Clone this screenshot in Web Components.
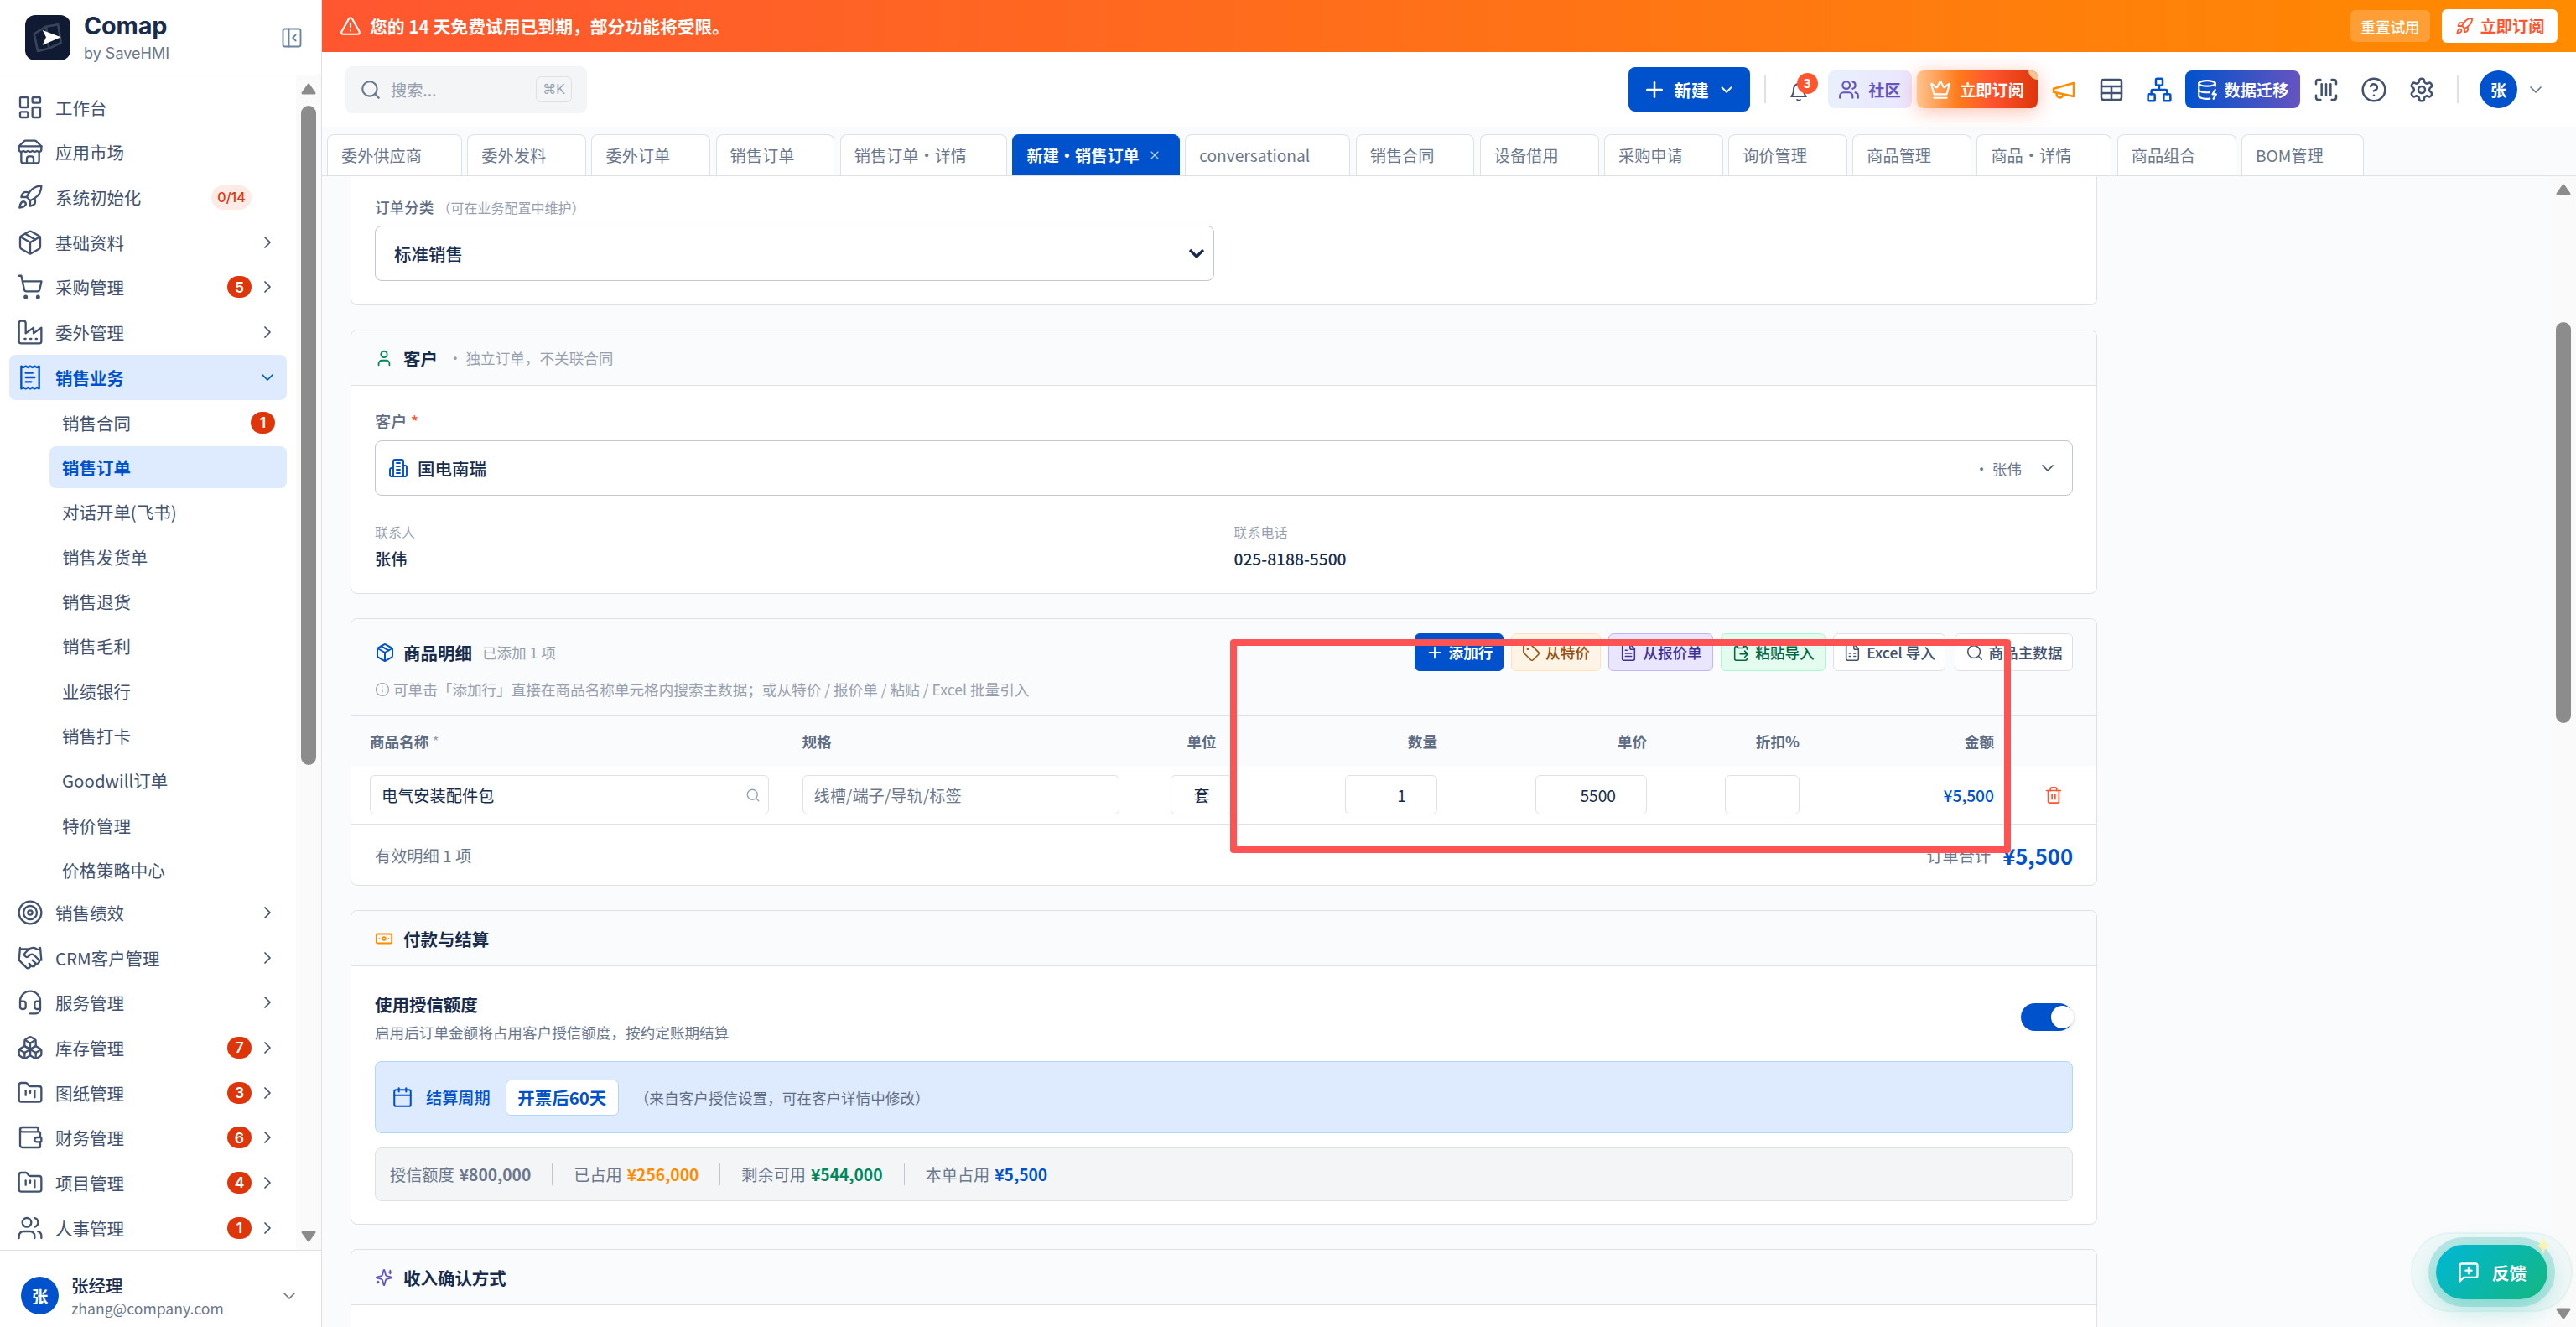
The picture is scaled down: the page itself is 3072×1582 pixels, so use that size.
<!DOCTYPE html>
<html lang="zh-CN">
<head>
<meta charset="utf-8">
<title>Comap</title>
<style>
  html, body { margin: 0; padding: 0; height: 100%; overflow: hidden; background: #fafbfc; }
  body { font-family: "Noto Sans CJK SC", Inter, sans-serif; color: #172b4d; }
</style>
</head>
<body>
<app-shell></app-shell>
<script>
  const p = (...ds) => ds.map((d) => `<path d="${d}"/>`).join('');
  const file = 'M15 2H6a2 2 0 0 0-2 2v16a2 2 0 0 0 2 2h12a2 2 0 0 0 2-2V7Z';

  const ICONS = {
    dashboard: '<rect x="3" y="3" width="7" height="9" rx="1"/><rect x="14" y="3" width="7" height="5" rx="1"/><rect x="14" y="12" width="7" height="9" rx="1"/><rect x="3" y="16" width="7" height="5" rx="1"/>',
    store: p('m2 7 4.41-4.41A2 2 0 0 1 7.83 2h8.34a2 2 0 0 1 1.42.59L22 7', 'M4 12v8a2 2 0 0 0 2 2h12a2 2 0 0 0 2-2v-8', 'M15 22v-4a2 2 0 0 0-2-2h-2a2 2 0 0 0-2 2v4', 'M2 7h20', 'M22 7v3a2 2 0 0 1-2 2a2.7 2.7 0 0 1-1.59-.63.7.7 0 0 0-.82 0A2.7 2.7 0 0 1 16 12a2.7 2.7 0 0 1-1.59-.63.7.7 0 0 0-.82 0A2.7 2.7 0 0 1 12 12a2.7 2.7 0 0 1-1.59-.63.7.7 0 0 0-.82 0A2.7 2.7 0 0 1 8 12a2.7 2.7 0 0 1-1.59-.63.7.7 0 0 0-.82 0A2.7 2.7 0 0 1 4 12a2 2 0 0 1-2-2V7'),
    rocket: p('M4.5 16.5c-1.5 1.26-2 5-2 5s3.74-.5 5-2c.71-.84.7-2.13-.09-2.91a2.18 2.18 0 0 0-2.91-.09z', 'm12 15-3-3a22 22 0 0 1 2-3.95A12.88 12.88 0 0 1 22 2c0 2.72-.78 7.5-6 11a22.35 22.35 0 0 1-4 2z', 'M9 12H4s.55-3.03 2-4c1.62-1.08 5 0 5 0', 'M12 15v5s3.03-.55 4-2c1.08-1.62 0-5 0-5'),
    package: p('m7.5 4.27 9 5.15', 'M21 8a2 2 0 0 0-1-1.73l-7-4a2 2 0 0 0-2 0l-7 4A2 2 0 0 0 3 8v8a2 2 0 0 0 1 1.73l7 4a2 2 0 0 0 2 0l7-4A2 2 0 0 0 21 16Z', 'm3.3 7 8.7 5 8.7-5', 'M12 22V12'),
    cart: '<circle cx="8" cy="21" r="1"/><circle cx="19" cy="21" r="1"/>' + p('M2.05 2.05h2l2.66 12.42a2 2 0 0 0 2 1.58h9.78a2 2 0 0 0 1.95-1.57l1.65-7.43H5.12'),
    factory: p('M2 20a2 2 0 0 0 2 2h16a2 2 0 0 0 2-2V8l-7 5V8l-7 5V4a2 2 0 0 0-2-2H4a2 2 0 0 0-2 2Z', 'M17 18h1', 'M12 18h1', 'M7 18h1'),
    receipt: p('M4 2v20l2-1 2 1 2-1 2 1 2-1 2 1 2-1 2 1V2l-2 1-2-1-2 1-2-1-2 1-2-1-2 1Z', 'M14 8H8', 'M16 12H8', 'M13 16H8'),
    target: '<circle cx="12" cy="12" r="10"/><circle cx="12" cy="12" r="6"/><circle cx="12" cy="12" r="2"/>',
    handshake: p('m11 17 2 2a1 1 0 1 0 3-3', 'm14 14 2.5 2.5a1 1 0 1 0 3-3l-3.88-3.88a3 3 0 0 0-4.24 0l-.88.88a1 1 0 1 1-3-3l2.81-2.81a5.79 5.79 0 0 1 7.06-.87l.47.28a2 2 0 0 0 1.42.25L21 4', 'm21 3 1 11h-2', 'M3 3 2 14l6.5 6.5a1 1 0 1 0 3-3', 'M3 4h8'),
    headset: p('M3 11h3a2 2 0 0 1 2 2v3a2 2 0 0 1-2 2H5a2 2 0 0 1-2-2v-5Zm0 0a9 9 0 1 1 18 0m0 0v5a2 2 0 0 1-2 2h-1a2 2 0 0 1-2-2v-3a2 2 0 0 1 2-2h3Z', 'M21 16v2a4 4 0 0 1-4 4h-5'),
    boxes: p('M2.97 12.92A2 2 0 0 0 2 14.63v3.24a2 2 0 0 0 .97 1.71l3 1.8a2 2 0 0 0 2.06 0L12 19v-5.5l-5-3-4.03 2.42Z', 'm7 16.5-4.74-2.85', 'm7 16.5 5-3', 'M7 16.5v5.17', 'M12 13.5V19l3.97 2.38a2 2 0 0 0 2.06 0l3-1.8a2 2 0 0 0 .97-1.71v-3.24a2 2 0 0 0-.97-1.71L17 10.5l-5 3Z', 'm17 16.5-5-3', 'm17 16.5 4.74-2.85', 'M17 16.5v5.17', 'M7.97 4.42A2 2 0 0 0 7 6.13v4.37l5 3 5-3V6.13a2 2 0 0 0-.97-1.71l-3-1.8a2 2 0 0 0-2.06 0l-3 1.8Z', 'M12 8 7.26 5.15', 'm12 8 4.74-2.85', 'M12 13.5V8'),
    kanban: p('M4 20h16a2 2 0 0 0 2-2V8a2 2 0 0 0-2-2h-7.93a2 2 0 0 1-1.66-.9l-.82-1.2A2 2 0 0 0 7.93 3H4a2 2 0 0 0-2 2v13c0 1.1.9 2 2 2Z', 'M8 10v4', 'M12 10v2', 'M16 10v6'),
    wallet: p('M19 7V4a1 1 0 0 0-1-1H5a2 2 0 0 0 0 4h15a1 1 0 0 1 1 1v4h-3a2 2 0 0 0 0 4h3a1 1 0 0 0 1-1v-2a1 1 0 0 0-1-1', 'M3 5v14a2 2 0 0 0 2 2h15a1 1 0 0 0 1-1v-4'),
    users: p('M16 21v-2a4 4 0 0 0-4-4H6a4 4 0 0 0-4 4v2', 'M22 21v-2a4 4 0 0 0-3-3.87', 'M16 3.13a4 4 0 0 1 0 7.75') + '<circle cx="9" cy="7" r="4"/>',
    panel: '<rect x="3" y="3" width="18" height="18" rx="2"/>' + p('M9 3v18', 'm16 15-3-3 3-3'),
    right: p('m9 18 6-6-6-6'),
    down: p('m6 9 6 6 6-6'),
    alert: p('m21.73 18-8-14a2 2 0 0 0-3.48 0l-8 14A2 2 0 0 0 4 21h16a2 2 0 0 0 1.73-3', 'M12 9v4', 'M12 17h.01'),
    search: '<circle cx="11" cy="11" r="8"/>' + p('m21 21-4.3-4.3'),
    plus: p('M5 12h14', 'M12 5v14'),
    x: p('M18 6 6 18', 'm6 6 12 12'),
    bell: p('M6 8a6 6 0 0 1 12 0c0 7 3 9 3 9H3s3-2 3-9', 'M10.3 21a1.94 1.94 0 0 0 3.4 0'),
    crown: p('M11.562 3.266a.5.5 0 0 1 .876 0L15.39 8.87a1 1 0 0 0 1.516.294L21.183 5.5a.5.5 0 0 1 .798.519l-2.834 10.246a1 1 0 0 1-.956.734H5.81a1 1 0 0 1-.957-.734L2.02 6.02a.5.5 0 0 1 .798-.519l4.276 3.664a1 1 0 0 0 1.516-.294z', 'M5 21h14'),
    megaphone: p('m3 11 18-5v12L3 14v-3z', 'M11.6 16.8a3 3 0 1 1-5.8-1.6'),
    table: '<rect x="3" y="3" width="18" height="18" rx="2"/>' + p('M12 9v12', 'M3 9h18', 'M3 15h18'),
    network: '<rect x="16" y="16" width="6" height="6" rx="1"/><rect x="2" y="16" width="6" height="6" rx="1"/><rect x="9" y="2" width="6" height="6" rx="1"/>' + p('M5 16v-3a1 1 0 0 1 1-1h12a1 1 0 0 1 1 1v3', 'M12 12V8'),
    database: '<ellipse cx="12" cy="5" rx="9" ry="3"/>' + p('M3 5V19A9 3 0 0 0 15 21.84', 'M21 5V8', 'M21 12L18 17H22L19 22', 'M3 12A9 3 0 0 0 14.59 14.87'),
    scan: p('M3 7V5a2 2 0 0 1 2-2h2', 'M17 3h2a2 2 0 0 1 2 2v2', 'M21 17v2a2 2 0 0 1-2 2h-2', 'M7 21H5a2 2 0 0 1-2-2v-2', 'M8 7v10', 'M12 7v10', 'M16 7v10'),
    help: '<circle cx="12" cy="12" r="10"/>' + p('M9.09 9a3 3 0 0 1 5.83 1c0 2-3 3-3 3', 'M12 17h.01'),
    settings: p('M12.22 2h-.44a2 2 0 0 0-2 2v.18a2 2 0 0 1-1 1.73l-.43.25a2 2 0 0 1-2 0l-.15-.08a2 2 0 0 0-2.73.73l-.22.38a2 2 0 0 0 .73 2.73l.15.1a2 2 0 0 1 1 1.72v.51a2 2 0 0 1-1 1.74l-.15.09a2 2 0 0 0-.73 2.73l.22.38a2 2 0 0 0 2.73.73l.15-.08a2 2 0 0 1 2 0l.43.25a2 2 0 0 1 1 1.73V20a2 2 0 0 0 2 2h.44a2 2 0 0 0 2-2v-.18a2 2 0 0 1 1-1.73l.43-.25a2 2 0 0 1 2 0l.15.08a2 2 0 0 0 2.73-.73l.22-.39a2 2 0 0 0-.73-2.73l-.15-.08a2 2 0 0 1-1-1.74v-.5a2 2 0 0 1 1-1.74l.15-.09a2 2 0 0 0 .73-2.73l-.22-.38a2 2 0 0 0-2.73-.73l-.15.08a2 2 0 0 1-2 0l-.43-.25a2 2 0 0 1-1-1.73V4a2 2 0 0 0-2-2z') + '<circle cx="12" cy="12" r="3"/>',
    user: p('M19 21v-2a4 4 0 0 0-4-4H9a4 4 0 0 0-4 4v2') + '<circle cx="12" cy="7" r="4"/>',
    building: p('M6 22V4a2 2 0 0 1 2-2h8a2 2 0 0 1 2 2v18Z', 'M6 12H4a2 2 0 0 0-2 2v6a2 2 0 0 0 2 2h2', 'M18 9h2a2 2 0 0 1 2 2v9a2 2 0 0 1-2 2h-2', 'M10 6h4', 'M10 10h4', 'M10 14h4', 'M10 18h4'),
    info: '<circle cx="12" cy="12" r="10"/>' + p('M12 16v-4', 'M12 8h.01'),
    tag: p('M12.586 2.586A2 2 0 0 0 11.172 2H4a2 2 0 0 0-2 2v7.172a2 2 0 0 0 .586 1.414l8.704 8.704a2.426 2.426 0 0 0 3.42 0l6.58-6.58a2.426 2.426 0 0 0 0-3.42z') + '<circle cx="7.5" cy="7.5" r=".5"/>',
    filetext: p(file, 'M14 2v4a2 2 0 0 0 2 2h4', 'M10 9H8', 'M16 13H8', 'M16 17H8'),
    paste: p('M15 2H9a1 1 0 0 0-1 1v2c0 .6.4 1 1 1h6c.6 0 1-.4 1-1V3c0-.6-.4-1-1-1Z', 'M8 4H6a2 2 0 0 0-2 2v14a2 2 0 0 0 2 2h12a2 2 0 0 0 2-2M16 4h2a2 2 0 0 1 2 2v2M11 14h10', 'm17 10 4 4-4 4'),
    sheet: p(file, 'M14 2v4a2 2 0 0 0 2 2h4', 'M8 13h2', 'M14 13h2', 'M8 17h2', 'M14 17h2'),
    trash: p('M3 6h18', 'M19 6v14c0 1-1 2-2 2H7c-1 0-2-1-2-2V6', 'M8 6V4c0-1 1-2 2-2h4c1 0 2 1 2 2v2', 'M10 11v6', 'M14 11v6'),
    banknote: '<rect x="2" y="6" width="20" height="12" rx="2"/><circle cx="12" cy="12" r="2"/>' + p('M6 12h.01M18 12h.01'),
    calendar: p('M8 2v4', 'M16 2v4', 'M3 10h18') + '<rect x="3" y="4" width="18" height="18" rx="2"/>',
    sparkles: p('M9.937 15.5A2 2 0 0 0 8.5 14.063l-6.135-1.582a.5.5 0 0 1 0-.962L8.5 9.936A2 2 0 0 0 9.937 8.5l1.582-6.135a.5.5 0 0 1 .963 0L14.063 8.5A2 2 0 0 0 15.5 9.937l6.135 1.581a.5.5 0 0 1 0 .964L15.5 14.063a2 2 0 0 0-1.437 1.437l-1.582 6.135a.5.5 0 0 1-.963 0z', 'M20 3v4', 'M22 5h-4', 'M4 17v2', 'M5 18H3'),
    feedback: p('M21 15a2 2 0 0 1-2 2H7l-4 4V5a2 2 0 0 1 2-2h14a2 2 0 0 1 2 2z', 'M12 7v6', 'M9 10h6'),
  };

  class UiIcon extends HTMLElement {
    connectedCallback() {
      const size = this.getAttribute('size') || 24;
      const sw = this.getAttribute('sw') || 2;
      const name = this.getAttribute('name');
      this.attachShadow({ mode: 'open' }).innerHTML = `
        <style>:host { display: inline-flex; flex: none; } svg { display: block; }</style>
        <svg xmlns="http://www.w3.org/2000/svg" width="${size}" height="${size}" viewBox="0 0 24 24" fill="none" stroke="currentColor" stroke-width="${sw}" stroke-linecap="round" stroke-linejoin="round">${ICONS[name] || ''}</svg>`;
    }
  }

  // barra de scroll dibujada, encima de su contenedor
  class ScrollRail extends HTMLElement {
    connectedCallback() {
      const top = this.getAttribute('thumb-top');
      const height = this.getAttribute('thumb-height');
      this.attachShadow({ mode: 'open' }).innerHTML = `
        <style>
          :host { position: absolute; top: 0; right: 0; bottom: 0; width: 30px; background: #fafafa; display: block; }
          .thumb { position: absolute; left: 6px; width: 18px; border-radius: 9px; background: #8c8c8c; }
          svg { position: absolute; left: 6px; }
          .up { top: 9px; }
          .dn { bottom: 9px; }
        </style>
        <svg class="up" width="18" height="14" viewBox="0 0 18 14"><path d="M9 2 L16 12 H2 Z" fill="#8c8c8c" stroke="#8c8c8c" stroke-width="3" stroke-linejoin="round"/></svg>
        <div class="thumb" style="top:${top}px;height:${height}px"></div>
        <svg class="dn" width="18" height="14" viewBox="0 0 18 14"><path d="M9 12 L16 2 H2 Z" fill="#8c8c8c" stroke="#8c8c8c" stroke-width="3" stroke-linejoin="round"/></svg>`;
    }
  }

  class NavRow extends HTMLElement {
    connectedCallback() {
      const icon = this.getAttribute('icon');
      const badge = this.getAttribute('badge');
      const chip = this.getAttribute('chip');
      const arrow = this.getAttribute('arrow');
      this.attachShadow({ mode: 'open' }).innerHTML = `
        <style>
          :host { display: block; }
          .row { display: flex; align-items: center; height: 53.67px; margin: 0 0 0 11px; width: 331px; padding: 0 11px 0 9px; box-sizing: border-box; font-size: 20.48px; color: #42526e; border-radius: 8px; }
          :host([active]) .row { background: #deebff; color: #0052cc; font-weight: 600; }
          .label { margin-left: 14px; white-space: nowrap; }
          .badge { margin-left: auto; min-width: 29px; height: 26px; border-radius: 13px; background: #de350b; color: #fff; font: 600 17.6px Inter, sans-serif; display: flex; align-items: center; justify-content: center; }
          .chip { margin-left: auto; width: 48px; height: 29px; border-radius: 15px; background: #ffebe6; color: #de350b; font: 500 16px Inter, sans-serif; display: flex; align-items: center; justify-content: center; }
          .arrow { margin-left: 7px; width: 24px; height: 24px; }
          .spacer { margin-left: auto; }
          .sub { height: 50px; margin: 0 0 3.3px 59px; width: 283px; padding: 0 14px 0 15px; border-radius: 8px; }
        </style>
        <div class="row ${this.hasAttribute('sub') ? 'sub' : ''}">
          ${icon ? `<ui-icon name="${icon}" size="32" sw="1.75"></ui-icon>` : ''}
          <span class="label" style="${icon ? '' : 'margin-left:0'}"><slot></slot></span>
          ${badge ? `<span class="badge">${badge}</span>` : ''}
          ${chip ? `<span class="chip">${chip}</span>` : ''}
          ${!badge && !chip ? '<span class="spacer"></span>' : ''}
          ${this.hasAttribute('sub') ? '' : `<span class="arrow">${arrow ? `<ui-icon name="${arrow}" size="24" sw="1.75"></ui-icon>` : ''}</span>`}
        </div>`;
    }
  }

  class SideNav extends HTMLElement {
    constructor() {
      super();
      const top = [
        ['dashboard', '工作台', {}],
        ['store', '应用市场', {}],
        ['rocket', '系统初始化', { chip: '0/14' }],
        ['package', '基础资料', { arrow: 'right' }],
        ['cart', '采购管理', { arrow: 'right', badge: '5' }],
        ['factory', '委外管理', { arrow: 'right' }],
        ['receipt', '销售业务', { arrow: 'down', active: '' }],
      ];
      const subs = [
        ['销售合同', { badge: '1' }], ['销售订单', { active: '' }], ['对话开单(飞书)', {}], ['销售发货单', {}],
        ['销售退货', {}], ['销售毛利', {}], ['业绩银行', {}], ['销售打卡', {}],
        ['Goodwill订单', {}], ['特价管理', {}], ['价格策略中心', {}],
      ];
      const rest = [
        ['target', '销售绩效', { arrow: 'right' }],
        ['handshake', 'CRM客户管理', { arrow: 'right' }],
        ['headset', '服务管理', { arrow: 'right' }],
        ['boxes', '库存管理', { arrow: 'right', badge: '7' }],
        ['kanban', '图纸管理', { arrow: 'right', badge: '3' }],
        ['wallet', '财务管理', { arrow: 'right', badge: '6' }],
        ['kanban', '项目管理', { arrow: 'right', badge: '4' }],
        ['users', '人事管理', { arrow: 'right', badge: '1' }],
      ];
      const attrs = (o) => Object.entries(o).map(([k, v]) => `${k}="${v}"`).join(' ');
      const row = ([icon, label, o]) => `<nav-row icon="${icon}" ${attrs(o)}>${label}</nav-row>`;
      const shadow = this.attachShadow({ mode: 'open' });
      shadow.innerHTML = `
        <style>
          :host { display: flex; flex-direction: column; height: 100%; background: #fff; border-right: 1px solid #dfe1e6; box-sizing: border-box; position: relative; z-index: 2; }
          .head { height: 89px; border-bottom: 1px solid #dfe1e6; display: flex; align-items: center; padding: 0 21px 0 30px; flex: none; }
          .logo { width: 54px; height: 54px; border-radius: 12px; background: #101a33; flex: none; }
          .brand { margin-left: 16px; flex: 1; font-family: Inter, sans-serif; }
          .name { font-size: 28.8px; font-weight: 700; color: #172b4d; line-height: 34px; letter-spacing: -.2px; }
          .by { font-size: 18px; color: #6b778c; line-height: 24px; margin-top: 4px; }
          .collapse { color: #6b84a3; }
          .scroll { flex: 1; position: relative; overflow: hidden; padding-top: 11px; }
          .subs { padding-top: 2.3px; margin-bottom: -4px; }
          .foot { height: 108px; border-top: 1px solid #dfe1e6; flex: none; display: flex; align-items: center; padding: 0 26px 0 25px; box-sizing: border-box; background: #fff; position: relative; }
          .avatar { width: 45px; height: 45px; border-radius: 50%; background: #0052cc; color: #fff; font-size: 19.2px; font-weight: 600; display: flex; align-items: center; justify-content: center; flex: none; }
          .who { margin-left: 15px; flex: 1; }
          .who b { display: block; font-size: 20.48px; font-weight: 500; line-height: 28px; }
          .who span { display: block; font-size: 17.6px; color: #6b778c; line-height: 24px; margin-top: 2px; }
          .chev { color: #6b778c; }
        </style>
        <div class="head">
          <svg class="logo" viewBox="0 0 54 54">
            <g fill="none" stroke="#3a4459" stroke-width="2.6" stroke-linejoin="round">
              <path d="M10.7 22.3 25 13.7 39.3 11.3 42.7 33 28.3 39.7 15 43Z"/>
              <path d="M25 13.7 28.3 39.7"/>
            </g>
            <path d="M20.7 18 42.7 26.3 20.7 35.7 25 26.3Z" fill="#fff"/>
          </svg>
          <div class="brand"><div class="name">Comap</div><div class="by">by SaveHMI</div></div>
          <ui-icon class="collapse" name="panel" size="28" sw="1.6"></ui-icon>
        </div>
        <div class="scroll">
          ${top.map(row).join('')}
          <div class="subs">${subs.map(([label, o]) => `<nav-row sub ${attrs(o)}>${label}</nav-row>`).join('')}</div>
          ${rest.map(row).join('')}
          <scroll-rail thumb-top="36" thumb-height="786"></scroll-rail>
        </div>
        <div class="foot">
          <div class="avatar">张</div>
          <div class="who"><b>张经理</b><span>zhang@company.com</span></div>
          <ui-icon class="chev" name="down" size="24" sw="1.75"></ui-icon>
        </div>`;
    }
  }

  class TrialBanner extends HTMLElement {
    constructor() {
      super();
      this.attachShadow({ mode: 'open' }).innerHTML = `
        <style>
          :host { display: flex; align-items: center; height: 62px; flex: none; padding: 0 22px 0 21px; background: linear-gradient(90deg, #ff5630, #ff8b00); color: #fff; box-sizing: border-box; }
          .msg { margin-left: 10px; font-size: 20.8px; font-weight: 600; flex: 1; white-space: nowrap; }
          .reset { width: 95px; height: 38px; border-radius: 6px; background: rgba(255,255,255,.2); font-size: 17.6px; font-weight: 500; display: flex; align-items: center; justify-content: center; }
          .go { margin-left: 14px; width: 138px; height: 40px; border-radius: 6px; background: #fff; color: #ff5630; font-size: 19.2px; font-weight: 600; display: flex; align-items: center; justify-content: center; gap: 8px; }
        </style>
        <ui-icon name="alert" size="26" sw="2"></ui-icon>
        <span class="msg">您的 14 天免费试用已到期，部分功能将受限。</span>
        <span class="reset">重置试用</span>
        <span class="go"><ui-icon name="rocket" size="22" sw="2"></ui-icon>立即订阅</span>`;
    }
  }

  class TopBar extends HTMLElement {
    constructor() {
      super();
      this.attachShadow({ mode: 'open' }).innerHTML = `
        <style>
          :host { display: flex; align-items: center; justify-content: space-between; height: 90px; flex: none; background: #fff; border-bottom: 1px solid #dfe1e6; box-sizing: border-box; padding: 0 36px 0 28px; }
          .search { width: 288px; height: 56px; border-radius: 8px; background: #f4f5f7; display: flex; align-items: center; padding: 0 18px 0 17px; box-sizing: border-box; color: #97a0af; font-size: 19.2px; }
          .search ui-icon { color: #6b778c; }
          .search span { margin-left: 11px; flex: 1; }
          .search kbd { width: 43px; height: 31px; border: 1px solid #dfe1e6; border-radius: 6px; box-sizing: border-box; font: 400 16px "Liberation Sans", "DejaVu Sans", sans-serif; display: flex; align-items: center; justify-content: center; }
          .acts { display: flex; align-items: center; }
          .btn { height: 45px; border-radius: 8px; display: flex; align-items: center; justify-content: center; font-size: 19.2px; font-weight: 600; color: #fff; box-sizing: border-box; position: relative; }
          .new { width: 145px; height: 53px; background: #0052cc; font-size: 20.8px; }
          .new .t { margin: 0 10px 0 8px; }
          .sep { width: 2px; height: 33px; background: #dfe1e6; flex: none; }
          .ib { width: 57px; height: 45px; display: flex; align-items: center; justify-content: center; color: #42526e; position: relative; flex: none; }
          .bell { margin-top: 7px; }
          .dot { position: absolute; left: 26px; top: 3px; width: 25px; height: 25px; border-radius: 50%; background: #ff5630; color: #fff; font: 700 14.4px Inter, sans-serif; display: flex; align-items: center; justify-content: center; }
          .com { width: 100px; margin-left: 6px; color: #6554c0; background: linear-gradient(90deg, #e9f0fc, #eae6ff); gap: 10px; }
          .sub { width: 144px; margin-left: 6px; margin-right: 2.5px; background: linear-gradient(90deg, #ffc48f 0%, #ff7a1a 35%, #ff5630 60%, #de350b 100%); box-shadow: 0 4px 22px rgba(255,86,48,.38); gap: 10px; overflow: visible; }
          .sub i { position: absolute; right: 0; top: 0; width: 11px; height: 11px; border-radius: 0 8px 0 11px; background: #ffc48f; }
          .mig { width: 137px; margin: 0 2.5px; background: linear-gradient(90deg, #0052cc, #6554c0); gap: 8px; }
          .av { width: 45px; height: 45px; border-radius: 50%; background: #0052cc; color: #fff; font-size: 19.2px; font-weight: 600; display: flex; align-items: center; justify-content: center; margin-left: 25px; flex: none; }
          .chev { margin-left: 10px; color: #6b778c; }
        </style>
        <div class="search"><ui-icon name="search" size="26" sw="2"></ui-icon><span>搜索...</span><kbd>⌘K</kbd></div>
        <div class="acts">
          <div class="btn new"><ui-icon name="plus" size="30" sw="2"></ui-icon><span class="t">新建</span><ui-icon name="down" size="22" sw="2"></ui-icon></div>
          <div class="sep" style="margin:0 11px 0 17px"></div>
          <div class="ib"><ui-icon class="bell" name="bell" size="24" sw="2"></ui-icon><span class="dot">3</span></div>
          <div class="btn com"><ui-icon name="users" size="26" sw="2"></ui-icon>社区</div>
          <div class="btn sub"><ui-icon name="crown" size="26" sw="2"></ui-icon>立即订阅<i></i></div>
          <div class="ib" style="color:#ff8b00"><ui-icon name="megaphone" size="32" sw="1.9"></ui-icon></div>
          <div class="ib"><ui-icon name="table" size="32" sw="1.9"></ui-icon></div>
          <div class="ib" style="color:#0052cc"><ui-icon name="network" size="32" sw="1.9"></ui-icon></div>
          <div class="btn mig"><ui-icon name="database" size="26" sw="2"></ui-icon>数据迁移</div>
          <div class="ib"><ui-icon name="scan" size="32" sw="1.9"></ui-icon></div>
          <div class="ib"><ui-icon name="help" size="32" sw="1.9"></ui-icon></div>
          <div class="ib"><ui-icon name="settings" size="32" sw="1.9"></ui-icon></div>
          <div class="sep" style="margin-left:14px"></div>
          <div class="av">张</div>
          <ui-icon class="chev" name="down" size="24" sw="1.75" style="margin-left:10px"></ui-icon>
        </div>`;
    }
  }

  class TabItem extends HTMLElement {
    connectedCallback() {
      const active = this.hasAttribute('active');
      this.attachShadow({ mode: 'open' }).innerHTML = `
        <style>
          :host { display: flex; align-items: center; height: 49px; padding: 0 16px; border: 1px solid #dfe1e6; border-bottom: 0; border-radius: 8px 8px 0 0; background: #fff; color: #6b778c; font-size: 19.2px; white-space: nowrap; box-sizing: border-box; flex: none; }
          :host([active]) { background: #0052cc; border-color: #0052cc; color: #fff; font-weight: 600; }
          .close { width: 26px; margin-left: 5px; display: flex; justify-content: center; opacity: .75; }
        </style>
        <slot></slot>
        <span class="close">${active ? '<ui-icon name="x" size="16" sw="1.75"></ui-icon>' : ''}</span>`;
    }
  }

  class TabStrip extends HTMLElement {
    constructor() {
      super();
      const tabs = ['委外供应商', '委外发料', '委外订单', '销售订单', '销售订单·详情', '新建·销售订单', 'conversational', '销售合同', '设备借用', '采购申请', '询价管理', '商品管理', '商品·详情', '商品组合', 'BOM管理'];
      this.attachShadow({ mode: 'open' }).innerHTML = `
        <style>
          :host { display: flex; align-items: flex-end; gap: 6.4px; height: 58px; padding-left: 6px; flex: none; background: #fafbfc; border-bottom: 1px solid #dfe1e6; box-sizing: border-box; }
        </style>
        ${tabs.map((t, i) => `<tab-item ${i === 5 ? 'active' : ''}>${t}</tab-item>`).join('')}`;
    }
  }

  class FormCard extends HTMLElement {
    connectedCallback() {
      const icon = this.getAttribute('icon');
      const tone = this.getAttribute('tone') || '#0052cc';
      const title = this.getAttribute('heading');
      this.attachShadow({ mode: 'open' }).innerHTML = `
        <style>
          :host { display: block; background: #fff; border: 1px solid #dfe1e6; border-radius: 8px; box-sizing: border-box; flex: none; }
          :host([clipped]) { border-top: 0; border-radius: 0 0 8px 8px; }
          .head { height: 65px; box-sizing: content-box; border-bottom: 1px solid #dfe1e6; background: #fafbfc; display: flex; align-items: center; padding: 0 28px; border-radius: 8px 8px 0 0; }
          .head b { margin-left: 12px; font-size: 20.48px; font-weight: 600; color: #172b4d; }
          .tone { color: ${tone}; }
          .sub { margin-left: 12px; font-size: 17.6px; color: #97a0af; }
        </style>
        ${title ? `<div class="head"><ui-icon class="tone" name="${icon}" size="22" sw="2"></ui-icon><b>${title}</b><span class="sub"><slot name="sub"></slot></span></div>` : ''}
        <slot></slot>`;
    }
  }

  class OrderPage extends HTMLElement {
    constructor() {
      super();
      this.attachShadow({ mode: 'open' }).innerHTML = `
        <style>
          :host { display: flex; flex-direction: column; gap: 29px; flex: 1; min-height: 0; overflow: hidden; padding: 0 571px 0 34px; position: relative; background: #fafbfc; }
          .pad { padding: 0 28px; }
          .lab { font-size: 19.2px; font-weight: 500; color: #5e6c84; line-height: 24px; }
          .lab em { font-style: normal; color: #ff5630; }
          .lab small { font-size: 16px; font-weight: 400; color: #97a0af; margin-left: 4px; }
          .select { height: 66px; width: 1001px; border: 1px solid #c1c7d0; border-radius: 8px; box-sizing: border-box; display: flex; align-items: center; justify-content: space-between; padding: 0 4px 0 22px; font-size: 20.48px; font-weight: 500; color: #172b4d; margin-top: 11px; }
          .cust { width: 100%; padding: 0 17px 0 15px; gap: 11px; }
          .cust b { font-weight: 500; flex: 1; }
          .cust small { font-size: 17.6px; color: #6b778c; font-weight: 400; margin-right: 8px; }
          .info { display: grid; grid-template-columns: 1fr 1fr; column-gap: 24px; margin-top: 32px; padding-bottom: 28px; }
          .info small { display: block; font-size: 16px; color: #97a0af; line-height: 22px; }
          .info b { display: block; font-size: 19.2px; font-weight: 500; color: #172b4d; line-height: 26px; margin-top: 8px; }
          /* productos */
          .ptop { display: flex; justify-content: space-between; padding: 17px 28px 18px; border-bottom: 1px solid #dfe1e6; background: #fafbfc; border-radius: 8px 8px 0 0; }
          .ptitle { display: flex; align-items: center; height: 45px; color: #0052cc; }
          .ptitle b { margin-left: 10px; font-size: 20.48px; font-weight: 600; color: #172b4d; }
          .ptitle span { margin-left: 12px; font-size: 17.6px; color: #97a0af; }
          .hint { display: flex; align-items: center; gap: 4px; font-size: 17.6px; color: #97a0af; line-height: 24px; margin-top: 10px; }
          .tools { display: flex; gap: 9px; }
          .tool { height: 45px; display: flex; align-items: center; justify-content: center; gap: 6px; border: 1px solid #dfe1e6; border-radius: 6px; box-sizing: border-box; font-size: 17.6px; font-weight: 500; color: #42526e; background: #fff; white-space: nowrap; }
          .add { background: #0052cc; border-color: #0052cc; color: #fff; font-weight: 600; }
          .deal { background: #fff4e5; border-color: #ffe2bd; color: #974f0c; }
          .quote { background: #eae6ff; border-color: #c0b6f2; color: #403294; }
          .paste { background: #e3fcef; border-color: #abf5d1; color: #006644; }
          .grid { display: grid; grid-template-columns: 515.5px 439.5px 74px 244px 250px 182px 232px 1fr; padding-left: 22px; align-items: center; }
          .ghead { height: 60px; background: #fafbfc; font-size: 17.6px; font-weight: 600; color: #5e6c84; }
          .ghead em { font-style: normal; font-weight: 400; color: #97a0af; }
          .grow { height: 71px; border-bottom: 2px solid #dfe1e6; box-sizing: border-box; font-size: 19.2px; color: #172b4d; }
          .r { justify-self: end; }
          .c { justify-self: center; }
          .inp { height: 47px; border: 1px solid #dfe1e6; border-radius: 6px; box-sizing: border-box; display: flex; align-items: center; background: #fff; }
          .name { width: 476px; padding: 0 9px 0 13px; justify-content: space-between; }
          .name ui-icon { color: #97a0af; }
          .spec { width: 378px; padding: 0 13px; color: #6b778c; }
          .unit { width: 74px; justify-content: center; }
          .num { justify-content: flex-end; padding-right: 36px; }
          .amount { color: #0052cc; font-weight: 500; }
          .trash { color: #ff5630; margin-left: 60px; justify-self: start; }
          .pfoot { height: 71px; display: flex; align-items: center; justify-content: space-between; padding: 0 28px; font-size: 19.2px; color: #6b778c; }
          .sum { display: flex; align-items: center; gap: 14px; }
          .sum b { font-size: 25.6px; font-weight: 700; color: #0052cc; }
          /* pago */
          .paybody { padding: 30px 28px 27px; }
          .credit { display: flex; align-items: center; justify-content: space-between; }
          .credit b { display: block; font-size: 20.48px; font-weight: 600; line-height: 30px; color: #172b4d; }
          .credit span { display: block; font-size: 17.6px; color: #6b778c; line-height: 24px; margin-top: 7px; }
          .toggle { width: 62px; height: 33px; border-radius: 17px; background: #0052cc; position: relative; }
          .toggle::after { content: ''; position: absolute; right: -1px; top: 3px; width: 27px; height: 27px; border-radius: 50%; background: #fff; box-shadow: 0 1px 4px rgba(0,0,0,.2); }
          .cycle { height: 86px; margin-top: 22px; border: 1px solid #b3d4ff; border-radius: 8px; background: #deebff; box-sizing: border-box; display: flex; align-items: center; padding: 0 19px; color: #0052cc; }
          .cycle .t { margin-left: 15px; font-size: 19.2px; font-weight: 500; white-space: nowrap; }
          .pill { margin-left: 18px; height: 43px; width: 135px; border: 1px solid #b3d4ff; border-radius: 6px; background: #fff; box-sizing: border-box; display: flex; align-items: center; justify-content: center; font-size: 20.48px; font-weight: 600; }
          .cycle small { margin-left: 19px; font-size: 17.6px; color: #5e6c84; }
          .limits { height: 64px; margin-top: 17px; border: 1px solid #dfe1e6; border-radius: 8px; background: #f4f5f7; box-sizing: border-box; display: flex; align-items: center; padding: 0 17px; font-size: 19.2px; color: #6b778c; }
          .limits b { font-weight: 600; margin-left: 6px; }
          .limits i { width: 1px; height: 26px; background: #c1c7d0; margin: 0 25px; }
          .revenue { height: 180px; }
        </style>
        <form-card clipped>
          <div class="pad" style="padding-top:26px;padding-bottom:28px">
            <div class="lab" style="font-size:17.6px;line-height:22px">订单分类<small>（可在业务配置中维护）</small></div>
            <div class="select">标准销售<svg width="32" height="32" viewBox="0 0 24 24" fill="none" stroke="#172b4d" stroke-width="2.4"><path d="m6 9 6 6 6-6"/></svg></div>
          </div>
        </form-card>

        <form-card heading="客户" icon="user" tone="#00875a">
          <span slot="sub">· 独立订单，不关联合同</span>
          <div class="pad" style="padding-top:30px">
            <div class="lab">客户 <em>*</em></div>
            <div class="select cust">
              <ui-icon name="building" size="24" sw="1.9" style="color:#0052cc"></ui-icon>
              <b>国电南瑞</b><small>· 张伟</small>
              <ui-icon name="down" size="24" sw="1.75" style="color:#42526e"></ui-icon>
            </div>
            <div class="info">
              <div><small>联系人</small><b>张伟</b></div>
              <div><small>联系电话</small><b>025-8188-5500</b></div>
            </div>
          </div>
        </form-card>

        <form-card>
          <div class="ptop">
            <div>
              <div class="ptitle"><ui-icon name="package" size="24" sw="2"></ui-icon><b>商品明细</b><span>已添加 1 项</span></div>
              <div class="hint"><ui-icon name="info" size="18" sw="1.6"></ui-icon>可单击「添加行」直接在商品名称单元格内搜索主数据；或从特价 / 报价单 / 粘贴 / Excel 批量引入</div>
            </div>
            <div class="tools">
              <div class="tool add" style="width:106px"><ui-icon name="plus" size="22" sw="2"></ui-icon>添加行</div>
              <div class="tool deal" style="width:107px"><ui-icon name="tag" size="22" sw="1.7"></ui-icon>从特价</div>
              <div class="tool quote" style="width:125px"><ui-icon name="filetext" size="22" sw="1.7"></ui-icon>从报价单</div>
              <div class="tool paste" style="width:125px"><ui-icon name="paste" size="22" sw="1.7"></ui-icon>粘贴导入</div>
              <div class="tool" style="width:134px"><ui-icon name="sheet" size="22" sw="1.7"></ui-icon>Excel 导入</div>
              <div class="tool" style="width:141px;margin-left:2px"><ui-icon name="search" size="22" sw="1.7"></ui-icon>商品主数据</div>
            </div>
          </div>
          <div class="grid ghead">
            <span>商品名称 <em>*</em></span><span>规格</span><span class="c">单位</span>
            <span class="r">数量</span><span class="r">单价</span><span class="r">折扣%</span><span class="r">金额</span><span></span>
          </div>
          <div class="grid grow">
            <div class="inp name">电气安装配件包<ui-icon name="search" size="18" sw="1.75"></ui-icon></div>
            <div class="inp spec">线槽/端子/导轨/标签</div>
            <div class="inp unit">套</div>
            <div class="inp num r" style="width:110px">1</div>
            <div class="inp num r" style="width:133px">5500</div>
            <div class="inp num r" style="width:89px"></div>
            <span class="amount r">¥5,500</span>
            <ui-icon class="trash" name="trash" size="22" sw="1.9"></ui-icon>
          </div>
          <div class="pfoot"><span>有效明细 1 项</span><span class="sum">订单合计<b>¥5,500</b></span></div>
        </form-card>

        <form-card heading="付款与结算" icon="banknote" tone="#ff8b00">
          <div class="paybody">
            <div class="credit">
              <div><b>使用授信额度</b><span>启用后订单金额将占用客户授信额度，按约定账期结算</span></div>
              <div class="toggle"></div>
            </div>
            <div class="cycle">
              <ui-icon name="calendar" size="26" sw="1.9"></ui-icon>
              <span class="t">结算周期</span>
              <span class="pill">开票后60天</span>
              <small>（来自客户授信设置，可在客户详情中修改）</small>
            </div>
            <div class="limits">
              授信额度<b>¥800,000</b><i></i>
              已占用<b style="color:#ff8b00">¥256,000</b><i></i>
              剩余可用<b style="color:#00875a">¥544,000</b><i></i>
              本单占用<b style="color:#0052cc">¥5,500</b>
            </div>
          </div>
        </form-card>

        <form-card heading="收入确认方式" icon="sparkles" tone="#6554c0">
          <div class="revenue"></div>
        </form-card>

        <scroll-rail thumb-top="174" thumb-height="478"></scroll-rail>`;
    }
  }

  // boton flotante de feedback
  class FeedbackFab extends HTMLElement {
    constructor() {
      super();
      this.attachShadow({ mode: 'open' }).innerHTML = `
        <style>
          :host { position: absolute; right: 34px; bottom: 33px; width: 133px; height: 65px; border-radius: 33px; background: linear-gradient(135deg, #00b8d9, #14b87e); color: #fff; display: flex; align-items: center; justify-content: center; gap: 14px; font-size: 20.8px; font-weight: 600; box-shadow: 0 0 0 9px rgba(20,184,166,.24), 0 10px 32px rgba(20,184,166,.36); z-index: 5; }
          :host::before { content: ''; position: absolute; inset: -15px -30px; border-radius: 48px; background: rgba(20,184,166,.04); border: 2px solid rgba(20,184,166,.05); }
          svg { position: absolute; right: -3px; top: -10px; }
          ui-icon, span { position: relative; }
        </style>
        <ui-icon name="feedback" size="28" sw="2"></ui-icon><span>反馈</span>
        <svg width="16" height="22" viewBox="0 0 16 22"><path d="M8 0 Q9 9 16 11 Q9 13 8 22 Q7 13 0 11 Q7 9 8 0Z" fill="#fff3a8" opacity=".85"/></svg>`;
    }
  }

  // recuadro rojo de anotacion sobre la captura
  class MarkBox extends HTMLElement {
    constructor() {
      super();
      this.attachShadow({ mode: 'open' }).innerHTML = `
        <style>
          :host { position: absolute; left: 1467px; top: 762px; width: 931px; height: 255px; border: 8px solid #ff5252; border-radius: 4px; box-sizing: border-box; z-index: 4; display: block; }
        </style>`;
    }
  }

  class AppShell extends HTMLElement {
    constructor() {
      super();
      this.attachShadow({ mode: 'open' }).innerHTML = `
        <style>
          :host { display: grid; grid-template-columns: 384px 1fr; height: 100vh; position: relative; overflow: hidden; }
          .main { display: flex; flex-direction: column; min-width: 0; min-height: 0; height: 100vh; }
        </style>
        <side-nav></side-nav>
        <div class="main">
          <trial-banner></trial-banner>
          <top-bar></top-bar>
          <tab-strip></tab-strip>
          <order-page></order-page>
        </div>
        <mark-box></mark-box>
        <feedback-fab></feedback-fab>`;
    }
  }

  customElements.define('ui-icon', UiIcon);
  customElements.define('scroll-rail', ScrollRail);
  customElements.define('nav-row', NavRow);
  customElements.define('side-nav', SideNav);
  customElements.define('trial-banner', TrialBanner);
  customElements.define('top-bar', TopBar);
  customElements.define('tab-item', TabItem);
  customElements.define('tab-strip', TabStrip);
  customElements.define('form-card', FormCard);
  customElements.define('order-page', OrderPage);
  customElements.define('feedback-fab', FeedbackFab);
  customElements.define('mark-box', MarkBox);
  customElements.define('app-shell', AppShell);
</script>
</body>
</html>
